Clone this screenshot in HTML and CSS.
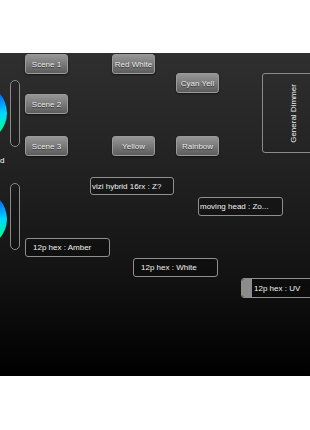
FILE: index.html
```html
<!DOCTYPE html>
<html lang="en">
<head>
    <meta charset="UTF-8">
    <meta name="viewport" content="width=device-width, initial-scale=1.0">
    <title>Lighting Board</title>
    <link rel="stylesheet" href="styles.css">
</head>
<body>
    <div class="board">
        <!-- colour pickers and faders on the left edge -->
        <div class="wheel wheel-1"></div>
        <div class="wheel wheel-2"></div>
        <div class="fader fader-1"></div>
        <div class="fader fader-2"></div>
        <span class="edge-label">d</span>

        <!-- scene buttons -->
        <button class="scene-btn btn-scene1">Scene 1</button>
        <button class="scene-btn btn-redwhite">Red White</button>
        <button class="scene-btn btn-cyan">Cyan Yell</button>
        <button class="scene-btn btn-scene2">Scene 2</button>
        <button class="scene-btn btn-scene3">Scene 3</button>
        <button class="scene-btn btn-yellow">Yellow</button>
        <button class="scene-btn btn-rainbow">Rainbow</button>

        <div class="dimmer">
            <span class="dimmer-label">General Dimmer</span>
        </div>

        <!-- fixtures -->
        <div class="fixture fx-vizi">vizi hybrid 16rx : Z?</div>
        <div class="fixture fx-moving">moving head : Zo...</div>
        <div class="fixture fx-amber">12p hex : Amber</div>
        <div class="fixture fx-white">12p hex : White</div>
        <div class="fixture fx-uv"><span class="fx-knob"></span>12p hex : UV</div>
    </div>
</body>
</html>
```

FILE: styles.css
```css
* {
    margin: 0;
    padding: 0;
    box-sizing: border-box;
}

body {
    font-family: 'Liberation Sans', Arial, sans-serif;
    background: #fff;
}

.board {
    position: relative;
    margin-top: 53px;
    height: 323px;
    overflow: hidden;
    background: linear-gradient(180deg, #2f2f2f 0%, #222 35%, #121212 70%, #000 100%);
}

.wheel {
    position: absolute;
    left: -51px;
    width: 58px;
    height: 58px;
    border-radius: 50%;
    background: conic-gradient(#0030ff 0deg, #0060ff 45deg, #00d8ff 90deg, #00ff88 135deg, #40ff00 170deg, #ffff00 210deg, #ff0000 270deg, #ff00ff 315deg, #0030ff 360deg);
}

.wheel-1 { top: 31px; }
.wheel-2 { top: 137px; }

.fader {
    position: absolute;
    left: 10px;
    width: 10px;
    height: 67px;
    border: 1px solid #8a8a8a;
    border-radius: 5px;
    background: rgba(0, 0, 0, 0.15);
}

.fader-1 { top: 27px; }
.fader-2 { top: 130px; }

.edge-label {
    position: absolute;
    left: 0;
    top: 103px;
    color: #fff;
    font-size: 8px;
}

.scene-btn {
    position: absolute;
    width: 43px;
    height: 20px;
    border: 1px solid #9a9a9a;
    border-radius: 3px;
    background: linear-gradient(180deg, #969696 0%, #7a7a7a 50%, #5c5c5c 100%);
    color: #ececec;
    font-family: 'Liberation Sans', Arial, sans-serif;
    font-size: 8px;
    text-shadow: 0 1px 1px rgba(0, 0, 0, 0.6);
    box-shadow: 0 1px 2px rgba(0, 0, 0, 0.5);
}

.btn-scene1 { left: 25px; top: 1px; }
.btn-redwhite { left: 112px; top: 1px; }
.btn-cyan { left: 176px; top: 20px; }
.btn-scene2 { left: 25px; top: 41px; }
.btn-scene3 { left: 25px; top: 83px; }
.btn-yellow { left: 112px; top: 83px; }
.btn-rainbow { left: 176px; top: 83px; }

.dimmer {
    position: absolute;
    left: 262px;
    top: 20px;
    width: 62px;
    height: 80px;
    border: 1px solid #8a8a8a;
    border-radius: 3px;
    display: flex;
    align-items: center;
    justify-content: center;
}

.dimmer-label {
    transform: rotate(-90deg);
    white-space: nowrap;
    color: #f0f0f0;
    font-size: 8px;
}

.fixture {
    position: absolute;
    height: 19px;
    border: 1px solid #8f8f8f;
    border-radius: 3px;
    background: rgba(0, 0, 0, 0.25);
    color: #f2f2f2;
    font-size: 8px;
    white-space: nowrap;
    overflow: hidden;
    display: flex;
    align-items: center;
    padding-left: 7px;
}

.fx-vizi { left: 90px; top: 124px; width: 84px; height: 18px; padding-left: 1px; }
.fx-moving { left: 198px; top: 144px; width: 85px; padding-left: 1px; }
.fx-amber { left: 25px; top: 185px; width: 85px; }
.fx-white { left: 133px; top: 205px; width: 85px; }
.fx-uv { left: 241px; top: 225px; width: 80px; height: 20px; padding-left: 0; gap: 2px; }

.fx-knob {
    width: 10px;
    height: 18px;
    background: #8c8c8c;
    border-radius: 2px 0 0 2px;
}
```
